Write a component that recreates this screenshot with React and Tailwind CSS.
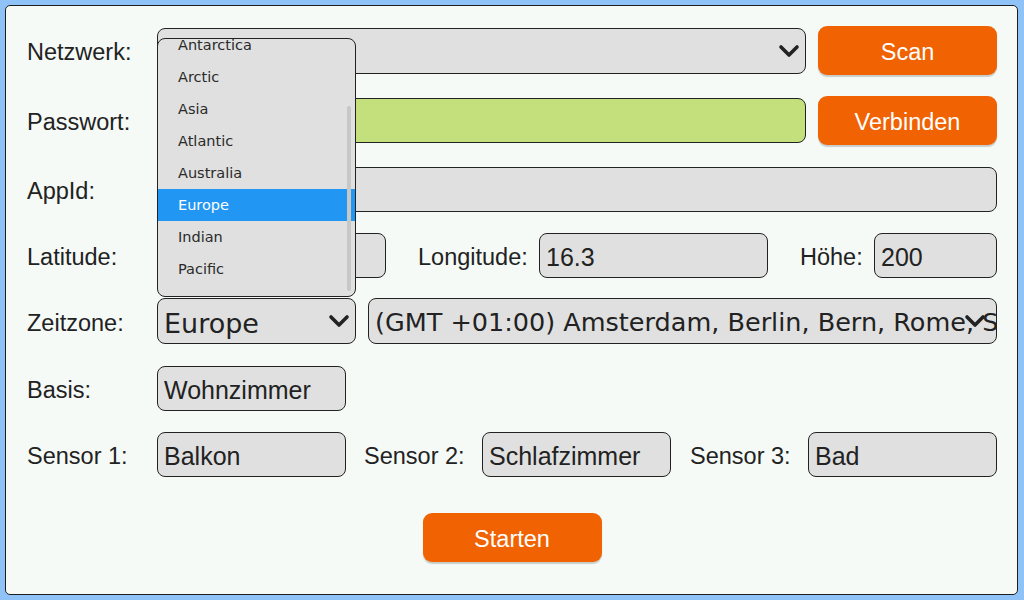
import React from "react";

const Chevron = ({ className = "" }) => (
  <svg className={className} width="22" height="14" viewBox="0 0 22 14" fill="none">
    <path d="M3 3 L11 11 L19 3" stroke="#222" strokeWidth="3.6" strokeLinecap="round" strokeLinejoin="round" />
  </svg>
);

const Label = ({ children, className = "" }) => (
  <div className={`shrink-0 text-[23.5px] leading-none text-[#222] pt-[5px] ${className}`}>{children}</div>
);

const Field = ({ value = "", className = "", green = false }) => (
  <div
    className={`h-[45px] rounded-[8px] border border-[#222] flex items-center pl-[6px] pt-[5px] text-[25px] leading-none text-[#222] overflow-hidden whitespace-nowrap ${
      green ? "bg-[#c4e07d]" : "bg-[#e0e0e0]"
    } ${className}`}
  >
    {value}
  </div>
);

const Button = ({ children, className = "" }) => (
  <div
    className={`h-[49px] w-[179px] shrink-0 rounded-[9px] bg-[#f06202] text-white text-[23.5px] leading-none flex items-center justify-center pt-[4px] shadow-[0_2px_1px_rgba(0,0,0,0.18)] ${className}`}
  >
    {children}
  </div>
);

const items = ["Antarctica", "Arctic", "Asia", "Atlantic", "Australia", "Europe", "Indian", "Pacific", "UTC"];

export default function App() {
  return (
    <div
      className="w-[1024px] h-[600px] bg-[#8fc2f6] pl-[5px] pr-[6px] pt-[5px] pb-[5px]"
      style={{ fontFamily: '"Liberation Sans", Arial, sans-serif' }}
    >
      <div className="relative h-full rounded-[5px] border border-[#1e1e1e] bg-[#f5faf7] pl-[21px] pr-[20px] pt-[20px]">
        {/* Row 1 */}
        <div className="flex items-center h-[49px]">
          <Label className="w-[130px]">Netzwerk:</Label>
          <div className="relative flex-1 h-[46px] rounded-[8px] border border-[#222] bg-[#e0e0e0]">
            <Chevron className="absolute right-[5px] top-[15px]" />
          </div>
          <Button className="ml-[12px]">Scan</Button>
        </div>
        {/* Row 2 */}
        <div className="flex items-center h-[49px] mt-[21px]">
          <Label className="w-[130px]">Passwort:</Label>
          <Field green className="flex-1" />
          <Button className="ml-[12px]">Verbinden</Button>
        </div>
        {/* Row 3 */}
        <div className="flex items-center h-[46px] mt-[21px]">
          <Label className="w-[130px]">AppId:</Label>
          <Field className="flex-1" />
        </div>
        {/* Row 4 */}
        <div className="flex items-center h-[46px] mt-[20px]">
          <Label className="w-[130px]">Latitude:</Label>
          <Field className="w-[229px] shrink-0" />
          <Label className="ml-[32px] w-[121px]">Longitude:</Label>
          <Field value="16.3" className="w-[229px] shrink-0" />
          <Label className="ml-[32px] w-[74px]">Höhe:</Label>
          <Field value="200" className="flex-1" />
        </div>
        {/* Row 5 */}
        <div className="flex items-center h-[46px] mt-[20px]">
          <Label className="w-[130px]">Zeitzone:</Label>
          <div
            className="relative w-[199px] shrink-0 h-[46px] rounded-[8px] border border-[#222] bg-[#e0e0e0] flex items-center pl-[6px] pt-[4px] text-[27px] leading-none text-[#222]"
            style={{ fontFamily: '"DejaVu Sans", sans-serif' }}
          >
            Europe
            <Chevron className="absolute right-[5px] top-[15px]" />
          </div>
          <div
            className="relative ml-[12px] flex-1 h-[46px] rounded-[8px] border border-[#222] bg-[#e0e0e0] flex items-center pl-[6px] pt-[4px] text-[25.5px] leading-none text-[#222] overflow-hidden whitespace-nowrap"
            style={{ fontFamily: '"DejaVu Sans", sans-serif' }}
          >
            (GMT +01:00) Amsterdam, Berlin, Bern, Rome, Stockholm, Vienna
            <Chevron className="absolute right-[10px] top-[15px]" />
          </div>
        </div>
        {/* Row 6 */}
        <div className="flex items-center h-[46px] mt-[21px]">
          <Label className="w-[130px]">Basis:</Label>
          <Field value="Wohnzimmer" className="w-[189px] shrink-0" />
        </div>
        {/* Row 7 */}
        <div className="flex items-center h-[46px] mt-[20px]">
          <Label className="w-[130px]">Sensor 1:</Label>
          <Field value="Balkon" className="w-[189px] shrink-0" />
          <Label className="ml-[18px] w-[118px]">Sensor 2:</Label>
          <Field value="Schlafzimmer" className="w-[189px] shrink-0" />
          <Label className="ml-[19px] w-[118px]">Sensor 3:</Label>
          <Field value="Bad" className="flex-1" />
        </div>
        {/* Start */}
        <div className="flex justify-center mt-[36px]">
          <Button>Starten</Button>
        </div>

        {/* Dropdown list */}
        <div
          className="absolute left-[151px] top-[32px] w-[199px] h-[259px] rounded-[8px] border border-[#222] bg-[#e0e0e0] overflow-hidden"
          style={{ fontFamily: '"DejaVu Sans", sans-serif' }}
        >
          <div className="-mt-[10px] flex flex-col">
            {items.map((it) => (
              <div
                key={it}
                className={`h-[32px] shrink-0 flex items-center pl-[20px] text-[14.5px] leading-none ${
                  it === "Europe" ? "bg-[#2196f3] text-white" : "text-[#2a2a2a]"
                }`}
              >
                {it}
              </div>
            ))}
          </div>
          <div className="absolute left-[189px] top-[67px] w-[4px] h-[185px] rounded-full bg-[#c6c8c6]" />
        </div>
      </div>
    </div>
  );
}
